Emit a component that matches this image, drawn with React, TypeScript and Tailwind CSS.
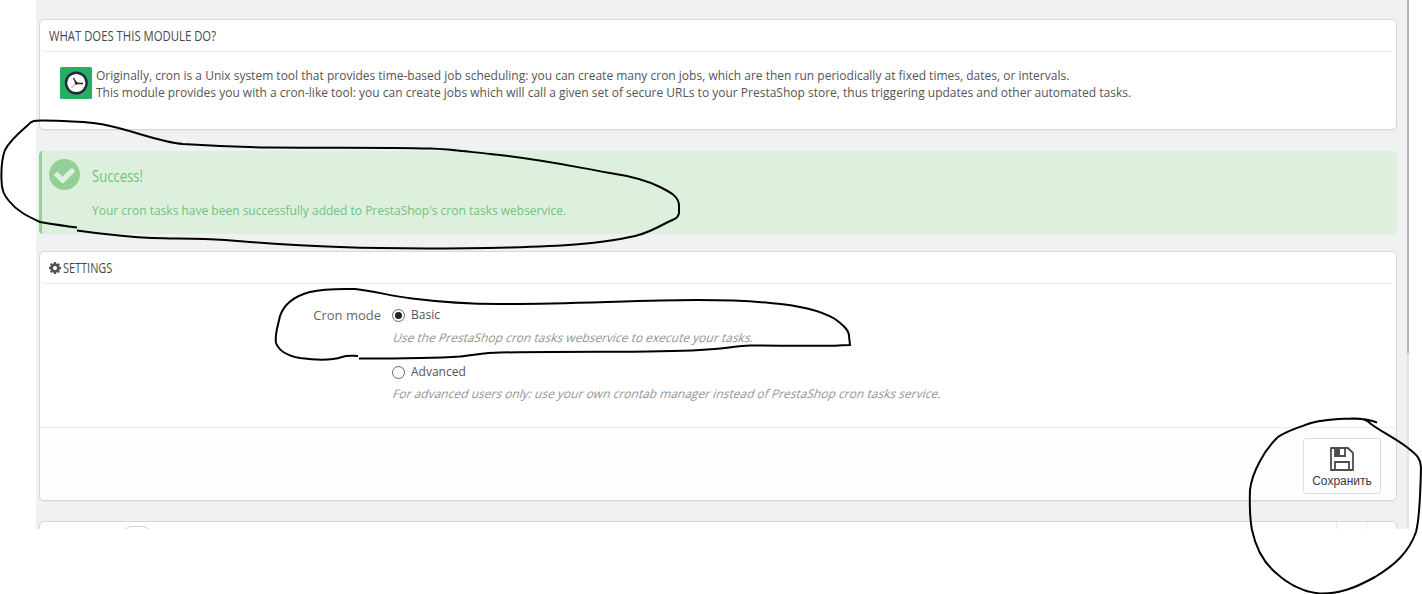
import type { ReactNode } from "react";

const strokes = [
  "M77 227.500C65 226 52 224 40 222C27 216 17 211 9 201C4 195 1.500 190 1.500 180C1 168 2 158 5 150C10 140 20 132 28 125C32 120 36 120.500 44 120.500C54 120.500 63 121 72 121.500C86 122 98 123 110 126C134 131 160 142 183 144C215 146 240 147 270 147.500C330 148 380 147 430 148.500C450 149 470 152 490 154C540 159 570 166 610 173C630 176 648 181 660 187C672 193 679 197 679 206L679 213C678 219 674 219 668 222C655 229 645 234 635 236C600 244 560 246 510 247.500C440 249 380 248.500 340 247C300 246 260 243 225 240C190 238 160 239 135 237C110 235 95 233 77 230.500",
  "M358 356C352 356 348 355 342 357C330 361 315 360 300 358C288 356 279 351 276 343C274.500 334 278 326 280 316C284 304 295 296 310 292C322 289 332 288.500 355 289C375 291 390 296 412 298.500C440 302 470 304 500 304C560 304 610 301.500 660 300.500C700 299.500 740 300 770 303C795 305 820 310 835 319C843 325 849 330 849 336L850 345C820 347 780 345 750 345.500C735 346 725 349 700 350C650 353 600 351 500 352.500C485 352.500 475 355 460 356.500C430 358.500 390 358.500 359 358.500",
  "M1377 422.500C1370 420 1366 419 1351 418.500M1351 418.500C1335 419 1322 420 1311 423C1300 427 1288 430 1278 437C1265 449 1252 472 1250 490C1249.500 505 1249.500 517 1252 530C1256 549 1264 563 1276 573C1289 585 1303 592 1320 593.500C1340 594 1355 588 1375 577C1395 565 1409 552 1416 532C1420 517 1420.500 490 1421 467C1420.500 457 1415 454 1408 448C1395 438 1380 431 1371 424C1367 420 1363 418 1351 418.500",
];

function Panel({ title, icon, titleClass, className, children }: { title: string; icon?: ReactNode; titleClass: string; className: string; children: ReactNode }) {
  return (
    <section className={`flex flex-col rounded-[5px] border border-[#d3d8db] bg-white shadow-[0_1px_1px_rgba(0,0,0,0.04)] ${className}`}>
      <header className="mx-[3px] mr-1 flex h-8 shrink-0 items-center border-b border-[#eaedef] pl-1.5">
        {icon}
        <h2 className={`origin-left whitespace-nowrap text-sm text-[#484848] ${titleClass}`}>{title}</h2>
      </header>
      {children}
    </section>
  );
}

function ClockIcon() {
  return (
    <svg className="h-8 w-8 shrink-0" viewBox="0 0 32 32">
      <rect width="32" height="32" rx="1.500" fill="#27ae60" />
      <circle cx="16.300" cy="16" r="10.300" fill="#fff" stroke="#222b3f" strokeWidth="2.400" />
      <path d="M16 16.500L11.500 21" stroke="#e77" strokeWidth="1" />
      <path d="M23 16.500h-6.500L13.500 11" fill="none" stroke="#1c2233" strokeWidth="1.400" />
      <circle cx="16.200" cy="16" r="1.500" fill="#1c2233" />
    </svg>
  );
}

function CogIcon() {
  return (
    <svg className="mr-0.5 h-3 w-3 shrink-0 fill-[#555]" viewBox="0 128 1536 1536">
      <path d="M1024 896q0-106-75-181t-181-75-181 75-75 181 75 181 181 75 181-75 75-181zm512-109v222q0 12-8 23t-20 13l-185 28q-19 54-39 91 35 50 107 138 10 12 10 25t-9 23q-27 37-99 108t-94 71q-12 0-26-9l-138-108q-44 23-91 38-16 136-29 186-7 28-36 28h-222q-14 0-24.500-8.500t-11.500-21.500l-28-184q-49-16-90-37l-141 107q-10 9-25 9-14 0-25-11-126-114-165-168-7-10-7-23 0-12 8-23 15-21 51-66.500t54-70.500q-27-50-41-99l-183-27q-13-2-21-12.500t-8-23.500v-222q0-12 8-23t19-13l186-28q14-46 39-92-40-57-107-138-10-12-10-24 0-10 9-23 26-36 98.500-107.500t94.500-71.500q13 0 26 10l138 107q44-23 91-38 16-136 29-186 7-28 36-28h222q14 0 24.500 8.500t11.500 21.500l28 184q49 16 90 37l142-107q9-9 24-9 13 0 25 10 129 119 165 170 7 8 7 22 0 12-8 23-15 21-51 66.500t-54 70.500q26 50 41 98l183 28q13 2 21 12.500t8 23.500z" />
    </svg>
  );
}

function CheckIcon() {
  return (
    <svg className="mt-[7.5px] h-[31px] w-[31px] shrink-0 fill-[#92d097]" viewBox="0 128 1536 1536">
      <path d="M1284 734q0-28-18-46l-91-90q-19-19-45-19t-45 19l-408 407-226-226q-19-19-45-19t-45 19l-91 90q-18 18-18 46 0 27 18 45l362 362q19 19 45 19 27 0 46-19l543-543q18-18 18-45zm252 162q0 209-103 385.500t-279.500 279.500-385.500 103-385.500-103-279.500-279.500-103-385.500 103-385.500 279.500-279.500 385.500-103 385.500 103 279.500 279.500 103 385.500z" />
    </svg>
  );
}

function SaveIcon() {
  return (
    <svg className="h-6 w-6" viewBox="0 0 24 24" fill="none" stroke="#4d4d4d" strokeWidth="1.800">
      <path d="M1 1h17l5 5v17H1z" strokeLinejoin="round" />
      <path d="M5 23v-8h14v8" />
      <path d="M5 1v8h10V1" />
      <path d="M5 1h5v8H5z" fill="#4d4d4d" stroke="none" />
    </svg>
  );
}

function Radio({ label, checked }: { label: string; checked?: boolean }) {
  return (
    <label className="flex h-[18px] items-center text-xs text-[#555]">
      <span className="mr-1.5 flex h-[13px] w-[13px] items-center justify-center rounded-full border border-[#666] bg-white">
        {checked && <span className="h-[7px] w-[7px] rounded-full bg-[#222]" />}
      </span>
      {label}
    </label>
  );
}

function Help({ children }: { children: ReactNode }) {
  return <p className="w-fit origin-[0_13px] -skew-x-[18deg] text-xs leading-[18px] text-[#959595]">{children}</p>;
}

export default function App() {
  return (
    <div className="relative h-[594px] w-[1422px] overflow-hidden bg-white pl-9 font-['Open_Sans',sans-serif]">
      <div className="flex h-[529px] w-[1373px] overflow-hidden bg-[#eff1f2]">
        <main className="w-[1361px] shrink-0 pl-[3px] pt-[19px]">
          <Panel title="WHAT DOES THIS MODULE DO?" titleClass="scale-x-[0.809]" className="h-[111px]">
            <div className="flex pl-5 pt-[15px] text-xs leading-[17px] text-[#555]">
              <ClockIcon />
              <div className="ml-1 whitespace-nowrap">
                <p>Originally, cron is a Unix system tool that provides time-based job scheduling: you can create many cron jobs, which are then run periodically at fixed times, dates, or intervals.</p>
                <p>This module provides you with a cron-like tool: you can create jobs which will call a given set of secure URLs to your PrestaShop store, thus triggering updates and other automated tasks.</p>
              </div>
            </div>
          </Panel>

          <div className="mb-[17px] mt-[21px] flex h-[83px] rounded-sm border-l-[3px] border-[#92d097] bg-[#ddf0de] pl-[7px] text-[#72c279]">
            <CheckIcon />
            <div className="ml-3">
              <h4 className="mt-[13px] origin-left scale-x-[0.77] text-[17px] leading-6">Success!</h4>
              <p className="mt-[14px] whitespace-nowrap text-xs leading-[17px]">Your cron tasks have been successfully added to PrestaShop's cron tasks webservice.</p>
            </div>
          </div>

          <Panel title="SETTINGS" icon={<CogIcon />} titleClass="scale-x-[0.78]" className="h-[250px]">
            <div className="flex flex-1 pt-[22px]">
              <div className="w-[341px] text-right text-[13px] leading-[18px] text-[#666]">Cron mode</div>
              <div className="ml-[11px] whitespace-nowrap">
                <Radio label="Basic" checked />
                <div className="mb-4 mt-[5px]">
                  <Help>Use the PrestaShop cron tasks webservice to execute your tasks.</Help>
                </div>
                <Radio label="Advanced" />
                <div className="mt-1">
                  <Help>For advanced users only: use your own crontab manager instead of PrestaShop cron tasks service.</Help>
                </div>
              </div>
            </div>
            <footer className="flex h-[73px] justify-end rounded-b-[5px] border-t border-[#eaedef] bg-[#fcfdfe] pr-[15px] pt-2.5">
              <button className="flex h-14 w-[78px] flex-col items-center rounded-[3px] border border-[#dddfe1] bg-white pt-2 font-['Liberation_Sans',sans-serif] text-xs text-[#363a41]">
                <SaveIcon />
                <span className="mt-0.5 leading-4">Сохранить</span>
              </button>
            </footer>
          </Panel>

          <div className="mt-5 flex h-10 rounded-[5px] border border-[#d3d8db] bg-white">
            <div className="ml-[82px] mt-1 h-5 w-[30px] rounded-[10px] border border-[#ccd0d8]" />
            <div className="ml-auto mr-[29px] w-[31px] border-x border-[#eaedef]" />
          </div>
        </main>
        <div className="ml-auto w-0.5 bg-[#e2e3e5]">
          <div className="h-[353px] bg-[#b3b3b5]" />
        </div>
      </div>

      <svg className="pointer-events-none absolute left-0 top-0 h-[594px] w-[1422px]" viewBox="0 0 1422 594" fill="none" stroke="#000" strokeWidth="2">
        {strokes.map((d) => (
          <path key={d} d={d} />
        ))}
      </svg>
    </div>
  );
}
